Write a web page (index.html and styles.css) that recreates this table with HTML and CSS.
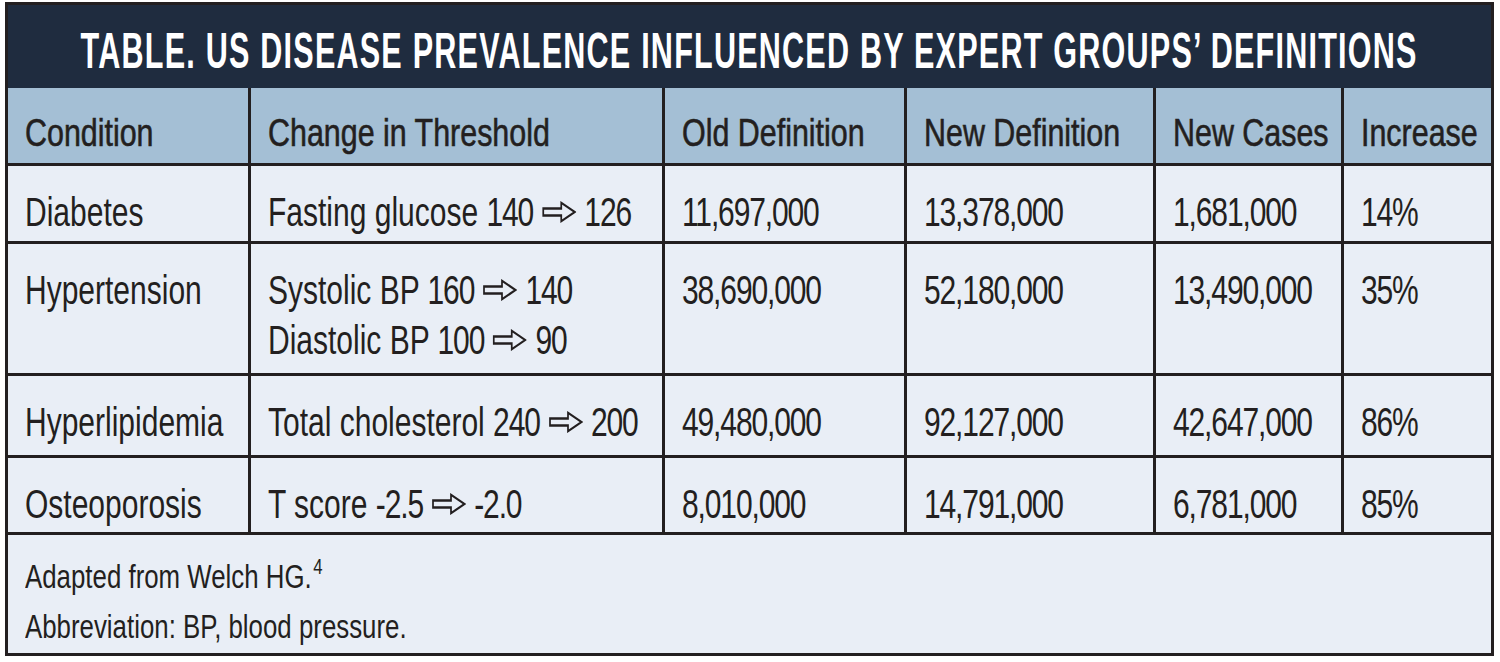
FILE: index.html
```html
<!DOCTYPE html>
<html lang="en">
<head>
<meta charset="utf-8">
<title>US Disease Prevalence Table</title>
<link rel="stylesheet" href="styles.css">
</head>
<body>
<div class="prev">
  <div class="title"><span class="tt">TABLE. US DISEASE PREVALENCE INFLUENCED BY EXPERT GROUPS’ DEFINITIONS</span></div>

  <div class="row head">
    <div class="cell"><span class="t">Condition</span></div>
    <div class="cell"><span class="t">Change in Threshold</span></div>
    <div class="cell"><span class="t">Old Definition</span></div>
    <div class="cell"><span class="t">New Definition</span></div>
    <div class="cell"><span class="t">New Cases</span></div>
    <div class="cell"><span class="t">Increase</span></div>
  </div>

  <div class="row">
    <div class="cell"><span class="t">Diabetes</span></div>
    <div class="cell"><span class="t">Fasting glucose <span class="num">140</span> <svg class="arr" viewBox="0 0 46 22" width="46" height="22"><path d="M2 7.5H26V1.8L44 11L26 20.2V14.5H2Z"/></svg> <span class="num">126</span></span></div>
    <div class="cell"><span class="t num">11,697,000</span></div>
    <div class="cell"><span class="t num">13,378,000</span></div>
    <div class="cell"><span class="t num">1,681,000</span></div>
    <div class="cell"><span class="t num">14%</span></div>
  </div>

  <div class="row">
    <div class="cell"><span class="t">Hypertension</span></div>
    <div class="cell"><span class="t">Systolic BP <span class="num">160</span> <svg class="arr" viewBox="0 0 46 22" width="46" height="22"><path d="M2 7.5H26V1.8L44 11L26 20.2V14.5H2Z"/></svg> <span class="num">140</span><br>Diastolic BP <span class="num">100</span> <svg class="arr" viewBox="0 0 46 22" width="46" height="22"><path d="M2 7.5H26V1.8L44 11L26 20.2V14.5H2Z"/></svg> <span class="num">90</span></span></div>
    <div class="cell"><span class="t num">38,690,000</span></div>
    <div class="cell"><span class="t num">52,180,000</span></div>
    <div class="cell"><span class="t num">13,490,000</span></div>
    <div class="cell"><span class="t num">35%</span></div>
  </div>

  <div class="row">
    <div class="cell"><span class="t">Hyperlipidemia</span></div>
    <div class="cell"><span class="t">Total cholesterol <span class="num">240</span> <svg class="arr" viewBox="0 0 46 22" width="46" height="22"><path d="M2 7.5H26V1.8L44 11L26 20.2V14.5H2Z"/></svg> <span class="num">200</span></span></div>
    <div class="cell"><span class="t num">49,480,000</span></div>
    <div class="cell"><span class="t num">92,127,000</span></div>
    <div class="cell"><span class="t num">42,647,000</span></div>
    <div class="cell"><span class="t num">86%</span></div>
  </div>

  <div class="row">
    <div class="cell"><span class="t">Osteoporosis</span></div>
    <div class="cell"><span class="t">T score <span class="num">-2.5</span> <svg class="arr" viewBox="0 0 46 22" width="46" height="22"><path d="M2 7.5H26V1.8L44 11L26 20.2V14.5H2Z"/></svg> <span class="num">-2.0</span></span></div>
    <div class="cell"><span class="t num">8,010,000</span></div>
    <div class="cell"><span class="t num">14,791,000</span></div>
    <div class="cell"><span class="t num">6,781,000</span></div>
    <div class="cell"><span class="t num">85%</span></div>
  </div>

  <div class="foot">
    <span class="t">Adapted from Welch HG.<sup>4</sup><br>Abbreviation: BP, blood pressure.</span>
  </div>
</div>
</body>
</html>
```

FILE: styles.css
```css
html, body {
  margin: 0;
  padding: 0;
  background: #ffffff;
}

body {
  font-family: "Liberation Sans", Arial, sans-serif;
  color: #231f20;
}

.prev {
  display: grid;
  grid-template-columns: 240px 411px 239px 246px 185px 147px;
  grid-template-rows: 80px 75px 75px 129px 79px 74px 118px;
  gap: 3px;
  padding: 3px;
  width: max-content;
  margin: 2px 0 0 5px;
  background: #231f20;
}

/* condensed look: the installed fonts have no condensed cut, so text is narrowed horizontally */
.t {
  display: inline-block;
  white-space: nowrap;
  transform: scaleX(0.75);
  transform-origin: left top;
}

.title {
  grid-column: 1 / -1;
  margin-bottom: -3px;
  background: #1f2c3f;
  color: #ffffff;
  display: flex;
  justify-content: center;
  padding-top: 21px;
  overflow: hidden;
}

.tt {
  display: inline-block;
  flex: none;
  white-space: nowrap;
  font-weight: 700;
  font-size: 50px;
  line-height: 50px;
  letter-spacing: 2px;
  transform: scaleX(0.611);
  transform-origin: center top;
}

.row {
  display: contents;
}

.cell {
  background: #e9eef6;
  font-size: 40px;
  line-height: 50px;
  padding: 21px 0 0 17px;
  white-space: nowrap;
}

.head .cell {
  background: #a4bfd5;
  font-size: 39px;
  padding-top: 20px;
}

.head .t {
  transform: scaleX(0.78);
  -webkit-text-stroke: 0.6px #231f20;
}

.num {
  letter-spacing: -1.5px;
}

.arr {
  fill: none;
  stroke: currentColor;
  stroke-width: 2.3;
  stroke-linejoin: miter;
  vertical-align: 3px;
}

.foot {
  grid-column: 1 / -1;
  background: #e9eef6;
  font-size: 34px;
  line-height: 50px;
  padding: 16px 0 0 17px;
}

.foot .t {
  transform: scaleX(0.76);
}

.foot sup {
  font-size: 22px;
  line-height: 0;
  vertical-align: 14px;
  margin-left: 2px;
}
```
